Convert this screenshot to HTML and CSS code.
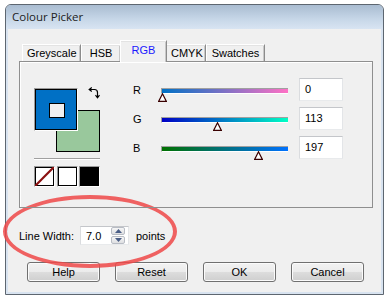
FILE: index.html
```html
<!DOCTYPE html>
<html>
<head>
<meta charset="utf-8">
<link rel="stylesheet" href="styles.css">
</head>
<body>
<div class="window">
  <div class="titlebar">Colour Picker</div>
  <div class="client">
    <div class="tabs">
      <div class="tab">Greyscale</div>
      <div class="tab">HSB</div>
      <div class="tab active">RGB</div>
      <div class="tab">CMYK</div>
      <div class="tab">Swatches</div>
    </div>
    <div class="panel">
      <div class="colours">
        <div class="wells">
          <div class="well stroke"></div>
          <div class="well fill"><div class="hole"></div></div>
          <svg class="swap" width="12" height="12" viewBox="0 0 12 12">
            <path d="M2 2.5 H6.5 Q9.5 2.5 9.5 5.5 V10" fill="none" stroke="#000" stroke-width="1.2"/>
            <path d="M3.8 0.5 L1.2 2.5 L3.8 4.5" fill="none" stroke="#000" stroke-width="1.2"/>
            <path d="M7.5 8.2 L9.5 10.8 L11.5 8.2" fill="none" stroke="#000" stroke-width="1.2"/>
          </svg>
        </div>
        <div class="sep"></div>
        <div class="presets">
          <div class="preset none">
            <svg width="19" height="19" viewBox="0 0 19 19"><line x1="0" y1="19" x2="19" y2="0" stroke="#8a1010" stroke-width="2.2"/></svg>
          </div>
          <div class="preset white"></div>
          <div class="preset black"></div>
        </div>
      </div>
      <div class="sliders">
        <div class="lbl">R</div>
        <div class="track"><div class="bar bar-r"></div><svg class="thumb" style="left:-3px" width="9" height="9" viewBox="0 0 9 9"><polygon points="4.5,0.8 8.4,8.4 0.6,8.4" fill="#fff" stroke="#3a0000" stroke-width="1.2"/></svg></div>
        <div class="field">0</div>

        <div class="lbl">G</div>
        <div class="track"><div class="bar bar-g"></div><svg class="thumb" style="left:52px" width="9" height="9" viewBox="0 0 9 9"><polygon points="4.5,0.8 8.4,8.4 0.6,8.4" fill="#fff" stroke="#3a0000" stroke-width="1.2"/></svg></div>
        <div class="field">113</div>

        <div class="lbl">B</div>
        <div class="track"><div class="bar bar-b"></div><svg class="thumb" style="left:93px" width="9" height="9" viewBox="0 0 9 9"><polygon points="4.5,0.8 8.4,8.4 0.6,8.4" fill="#fff" stroke="#3a0000" stroke-width="1.2"/></svg></div>
        <div class="field">197</div>
      </div>
    </div>
    <div class="linewidth">
      <span class="lw-label">Line Width:</span>
      <div class="spinbox">
        <span class="spin-val">7.0</span>
        <div class="spin-btns">
          <div class="spin-btn"><svg width="7" height="4" viewBox="0 0 7 4"><polygon points="3.5,0 7,4 0,4" fill="#4a5e86"/></svg></div>
          <div class="spin-btn"><svg width="7" height="4" viewBox="0 0 7 4"><polygon points="0,0 7,0 3.5,4" fill="#4a5e86"/></svg></div>
        </div>
      </div>
      <span class="lw-unit">points</span>
    </div>
    <div class="buttons">
      <div class="btn">Help</div>
      <div class="btn">Reset</div>
      <div class="btn">OK</div>
      <div class="btn">Cancel</div>
    </div>
  </div>
</div>
<div class="highlight"></div>
</body>
</html>
```

FILE: styles.css
```css
html, body {
  margin: 0;
  padding: 0;
  background: #ffffff;
}
body {
  position: relative;
  width: 387px;
  height: 301px;
  overflow: hidden;
  font-family: "Liberation Sans", Arial, sans-serif;
  font-size: 11px;
  color: #000;
}
.window {
  margin: 4px 0 0 5px;
  width: 379px;
  height: 291px;
  box-sizing: border-box;
  border: 1px solid #5d6670;
  border-radius: 6px 6px 0 0;
  background: #d8e3f0;
  display: flex;
  flex-direction: column;
  overflow: hidden;
}
.titlebar {
  height: 24px;
  flex: none;
  background: linear-gradient(#a9bcd1, #c7d7e8 60%, #d8e4f2);
  font-family: "Open Sans", sans-serif;
  font-size: 11.5px;
  line-height: 24px;
  padding-left: 6px;
  color: #222;
}
.client {
  flex: 1;
  margin: 0 2px 2px 2px;
  background: #f0f0f0;
  padding: 11px 0 0 11px;
  display: flex;
  flex-direction: column;
}
.tabs {
  display: flex;
  align-items: flex-end;
  height: 21px;
  padding-left: 3px;
  position: relative;
  z-index: 2;
}
.tab {
  height: 17px;
  box-sizing: border-box;
  border-top: 1px solid #ffffff;
  border-left: 1px solid #ffffff;
  border-right: 1px solid #8c8c8c;
  box-shadow: inset 0 1px 0 #e3e3e3, inset -1px 0 0 #c8c8c8;
  line-height: 16px;
  padding: 0 4px;
  background: #f0f0f0;
  text-align: center;
}
.tab:nth-child(1) { width: 59px; }
.tab:nth-child(2) { width: 40px; }
.tab:nth-child(4) { width: 40px; }
.tab:nth-child(5) { width: 59px; }
.tab.active {
  height: 22px;
  width: 47px;
  margin: 0 -1px -1px -1px;
  color: #1a1aff;
  line-height: 19px;
  position: relative;
  z-index: 3;
}
.panel {
  width: 354px;
  height: 147px;
  box-sizing: border-box;
  border: 1px solid #8f8f8f;
  box-shadow: inset 1px 1px 0 #ffffff;
  display: flex;
  padding: 16px 0 0 14px;
  position: relative;
  z-index: 1;
}
.colours {
  margin-top: 10px;
  width: 66px;
}
.wells {
  position: relative;
  width: 66px;
  height: 64px;
}
.well {
  position: absolute;
  box-sizing: border-box;
}
.well.fill {
  left: 0;
  top: 0;
  width: 44px;
  height: 43px;
  border: 1px solid;
  border-color: #9a9a9a #ffffff #ffffff #9a9a9a;
  background: #0070c5;
  box-shadow: inset 0 0 0 1px #000;
}
.hole {
  position: absolute;
  left: 14px;
  top: 14px;
  width: 16px;
  height: 15px;
  box-sizing: border-box;
  border: 1px solid #000;
  background: #f0f0f0;
}
.well.stroke {
  left: 22px;
  top: 22px;
  width: 44px;
  height: 42px;
  border: 1px solid #000;
  background: #99c89c;
}
.swap {
  position: absolute;
  left: 54px;
  top: -1px;
}
.sep {
  margin-top: 6px;
  height: 1px;
  background: #a0a0a0;
  border-bottom: 1px solid #ffffff;
}
.presets {
  margin-top: 6px;
  display: flex;
  justify-content: space-between;
}
.preset {
  width: 21px;
  height: 21px;
  box-sizing: border-box;
  border: 1px solid;
  border-color: #9a9a9a #ffffff #ffffff #9a9a9a;
  box-shadow: inset 0 0 0 1px #000;
  background: #fff;
  overflow: hidden;
}
.preset svg { display: block; }
.preset.black { background: #000; }
.sliders {
  margin-left: 33px;
  display: grid;
  grid-template-columns: 28px 127px 44px;
  grid-auto-rows: 22px;
  column-gap: 0;
  row-gap: 7px;
  align-self: flex-start;
}
.lbl {
  line-height: 24px;
}
.field {
  margin-left: 11px;
  width: 44px;
  height: 23px;
  box-sizing: border-box;
  border: 1px solid;
  border-color: #c4c6ca #e3e5e8 #e8eaec #dadcdf;
  background: #fff;
  padding-left: 5px;
  line-height: 21px;
}
.track {
  position: relative;
}
.bar {
  margin-top: 10px;
  height: 6px;
  box-sizing: border-box;
  border-top: 1px solid #a0a0a0;
  border-left: 1px solid #a0a0a0;
  border-bottom: 1px solid #ffffff;
}
.bar-r { background: linear-gradient(to right, #0071c5, #ff71c5); }
.bar-g { background: linear-gradient(to right, #0000c5, #00ffc5); }
.bar-b { background: linear-gradient(to right, #007100, #0071ff); }
.thumb {
  position: absolute;
  top: 15px;
}
.linewidth {
  margin-top: 18px;
  display: flex;
  align-items: center;
  height: 19px;
}
.lw-label { width: 61px; }
.spinbox {
  width: 49px;
  height: 19px;
  box-sizing: border-box;
  border: 1px solid;
  border-color: #c4c6ca #e3e5e8 #e8eaec #dadcdf;
  background: #fff;
  display: flex;
  align-items: center;
  padding-left: 5px;
}
.spin-val { width: 25px; }
.spin-btns {
  display: flex;
  flex-direction: column;
  gap: 1px;
}
.spin-btn {
  width: 14px;
  height: 8px;
  box-sizing: border-box;
  border: 1px solid #b8bcc4;
  border-radius: 2px;
  background: linear-gradient(#f6f6f6, #dedfe2);
  display: flex;
  align-items: center;
  justify-content: center;
}
.spin-btn svg { display: block; }
.lw-unit { margin-left: 7px; }
.buttons {
  margin-top: 17px;
  margin-left: 8px;
  display: flex;
  gap: 15px;
}
.btn {
  width: 73px;
  height: 20px;
  box-sizing: border-box;
  border: 1px solid #707070;
  border-radius: 3px;
  background: linear-gradient(#f2f2f2 0%, #ebebeb 50%, #dddddd 50%, #cfcfcf 100%);
  box-shadow: inset 0 0 0 1px #fbfbfb;
  text-align: center;
  line-height: 18px;
}
.highlight {
  position: absolute;
  left: 3px;
  top: 195px;
  width: 174px;
  height: 73px;
  box-sizing: border-box;
  border: 4px solid rgba(238, 72, 72, 0.85);
  border-radius: 50%;
}
```
